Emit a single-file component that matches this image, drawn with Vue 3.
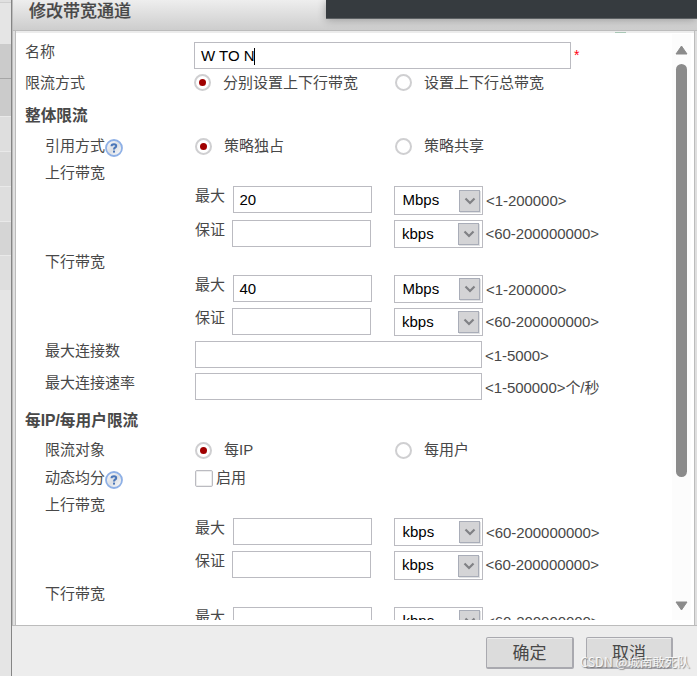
<script setup>
const LIMIT_SMALL = '<1-200000>'
const LIMIT_LARGE = '<60-200000000>'
const rows = [
  { kind: 'name', label: '名称', h: 27 },
  { kind: 'radio', label: '限流方式', options: ['分别设置上下行带宽', '设置上下行总带宽'], h: 27 },
  { kind: 'section', label: '整体限流', h: 38 },
  { kind: 'radio', label: '引用方式', indent: true, help: true, options: ['策略独占', '策略共享'], h: 24 },
  { kind: 'text', label: '上行带宽', indent: true, h: 28 },
  { kind: 'rate', label: '最大', value: '20', unit: 'Mbps', hint: LIMIT_SMALL, h: 34, tall: true },
  { kind: 'rate', label: '保证', value: '', unit: 'kbps', hint: LIMIT_LARGE, h: 27, near: true },
  { kind: 'text', label: '下行带宽', indent: true, h: 28 },
  { kind: 'rate', label: '最大', value: '40', unit: 'Mbps', hint: LIMIT_SMALL, h: 33 },
  { kind: 'rate', label: '保证', value: '', unit: 'kbps', hint: LIMIT_LARGE, h: 33, near: true },
  { kind: 'wide', label: '最大连接数', indent: true, hint: '<1-5000>', h: 32 },
  { kind: 'wide', label: '最大连接速率', indent: true, hint: '<1-500000>个/秒', h: 33 },
  { kind: 'section', label: '每IP/每用户限流', h: 28 },
  { kind: 'radio', label: '限流对象', indent: true, options: ['每IP', '每用户'], h: 32 },
  { kind: 'check', label: '动态均分', indent: true, help: true, h: 24 },
  { kind: 'text', label: '上行带宽', indent: true, h: 28 },
  { kind: 'rate', label: '最大', value: '', unit: 'kbps', hint: LIMIT_LARGE, h: 33 },
  { kind: 'rate', label: '保证', value: '', unit: 'kbps', hint: LIMIT_LARGE, h: 28, near: true, tall: true },
  { kind: 'text', label: '下行带宽', indent: true, h: 28 },
  { kind: 'rate', label: '最大', value: '', unit: 'kbps', hint: LIMIT_LARGE, h: 33 }
]
</script>

<template>
  <div class="page">
    <div class="rail">
      <i class="r0"></i><i class="r1"></i><i class="r2"></i><i class="r3"></i><i class="r4"></i>
      <i class="r5"></i><i class="r6"></i><i class="r7"></i><i class="r8"></i>
    </div>
    <div class="dialog">
      <header class="title">修改带宽通道</header>
      <div class="panel">
        <div class="form">
          <div
            v-for="(row, i) in rows"
            :key="i"
            class="row"
            :class="[row.kind, { indent: row.indent, near: row.near, tall: row.tall }]"
            :style="{ height: row.h + 'px' }"
          >
            <div v-if="row.kind !== 'rate'" class="label">
              <span>{{ row.label }}</span>
              <svg v-if="row.help" class="help" width="18" height="18" viewBox="0 0 18 18">
                <defs>
                  <linearGradient :id="'g' + i" x1="0" y1="0" x2="1" y2="1">
                    <stop offset="0" stop-color="#ffffff" />
                    <stop offset=".5" stop-color="#dcdfe4" />
                    <stop offset="1" stop-color="#ffffff" />
                  </linearGradient>
                </defs>
                <circle cx="9" cy="9" r="8" :fill="'url(#g' + i + ')'" stroke="#8eb0e6" stroke-width="1.8" />
                <path d="M6.6 7.2V6.5Q6.8 5.2 9 5.2Q11.2 5.2 11.2 6.9Q11.2 7.9 10.1 8.5Q9 9.1 9 10.4" fill="none" stroke="#4a76b8" stroke-width="2" />
                <rect x="8" y="11.6" width="2" height="2" fill="#4a76b8" />
              </svg>
            </div>

            <template v-if="row.kind === 'name'">
              <div class="field">W TO N<span class="caret"></span></div>
              <span class="star">*</span>
            </template>

            <template v-else-if="row.kind === 'radio'">
              <div v-for="(o, n) in row.options" :key="o" class="option">
                <span class="dot"><b v-if="n === 0"></b></span>
                <span>{{ o }}</span>
              </div>
            </template>

            <template v-else-if="row.kind === 'check'">
              <span class="box"></span><span>启用</span>
            </template>

            <template v-else-if="row.kind === 'wide'">
              <div class="field"></div>
              <span class="hint">{{ row.hint }}</span>
            </template>

            <template v-else-if="row.kind === 'rate'">
              <span class="sub">{{ row.label }}</span>
              <div class="field">{{ row.value }}</div>
              <div class="select">
                <span>{{ row.unit }}</span>
                <span class="drop">
                  <svg width="12" height="8" viewBox="0 0 12 8">
                    <path d="M1.5 1.5L6 6L10.5 1.5" fill="none" stroke="#808185" stroke-width="2.2" />
                  </svg>
                </span>
              </div>
              <span class="hint">{{ row.hint }}</span>
            </template>
          </div>
        </div>
        <div class="scroll">
          <svg width="13" height="10" viewBox="0 0 13 10"><path d="M6.5 1L12 9H1Z" fill="#8b8b8b" stroke="#8b8b8b" stroke-linejoin="round" /></svg>
          <div class="thumb"></div>
          <svg class="down" width="13" height="10" viewBox="0 0 13 10"><path d="M1 1H12L6.5 9Z" fill="#8b8b8b" stroke="#8b8b8b" stroke-linejoin="round" /></svg>
        </div>
      </div>
      <footer class="actions">
        <div class="btn">确定</div>
        <div class="btn cancel">取消</div>
      </footer>
    </div>
    <div class="shade"></div>
    <div class="glint"></div>
    <div class="mark">CSDN @城南敢死队</div>
  </div>
</template>

<style>
body { margin: 0; overflow: hidden; }
</style>

<style scoped>
* { box-sizing: border-box; }
.page {
  position: relative;
  display: flex;
  width: 697px;
  height: 676px;
  overflow: hidden;
  background: #e5e5e5;
  color: #484848;
  font: 15px/18px "Liberation Sans", "Noto Sans CJK SC", sans-serif;
  white-space: nowrap;
}
.rail { width: 11px; display: flex; flex-direction: column; }
.rail i { display: block; flex: none; border-bottom: 1px solid #e9e9e9; }
.rail .r0 { height: 3px; background: #e0e0e0; border-color: #cfcfcf; }
.rail .r1 { height: 41px; background: #e5e5e5; border-color: #e5e5e5; }
.rail .r2 { height: 35px; background: #cbcbcb; border-color: #a6a6a6; }
.rail .r3 { height: 38px; background: #cbcbcb; }
.rail .r4 { height: 35px; background: #dedede; }
.rail .r5 { height: 35px; background: #d8d8d8; }
.rail .r6 { height: 35px; background: #dedede; }
.rail .r7 { height: 34px; background: #d5d5d5; }
.rail .r8 { height: 34px; background: #dedede; border: 0; }
.dialog {
  width: 686px;
  display: flex;
  flex-direction: column;
  border-left: 1px solid #858585;
  background: #ededed;
}
.title {
  height: 30px;
  padding-left: 16px;
  border-left: 1px solid #bcbcbc;
  background: linear-gradient(#eee, #cdcdcd);
  font-size: 17px;
  font-weight: 500;
  line-height: 24px;
  -webkit-text-stroke: .2px #484848;
}
.panel {
  display: flex;
  width: 685px;
  height: 596px;
  border-left: 1px solid #bcbcbc;
  background: #fff;
  border-top: 1px solid #bcbcbc;
  border-bottom: 1px solid #bcbcbc;
  box-shadow: inset 2px 0 #e0e0e0, inset -2px 0 #dedede, inset 3px 0 #bcbcbc, inset -3px 0 #bcbcbc, inset 0 2px #ececec;
}
.form { width: 659px; height: 589px; padding-top: 11px; overflow: hidden; }
.row { display: flex; align-items: flex-start; }
.label { width: 181px; padding-left: 12px; display: flex; flex: none; }
.name .label, .wide .label, .sub { padding-top: 1px; }
.indent .label { padding-left: 32px; width: 182px; }
.radio, .section, .text, .check { align-items: center; }
.section .label { font-size: 15.7px; font-weight: bold; padding-top: 2px; }
.text .label { padding-top: 1px; }
.help { margin: 2px 0 -2px 0; flex: none; }
.field {
  width: 139px;
  height: 27px;
  border: 1px solid #bbbbc1;
  background: #fff;
  color: #000;
  line-height: 26px;
  padding-left: 6px;
  flex: none;
}
.rate .field { padding-left: 5.5px; }
.name .field { width: 377px; line-height: 25px; }
.wide .field { width: 287px; }
.wide .hint { margin: 6px 0 0 3px; }
.caret { display: inline-block; width: 1px; height: 17px; margin-left: -1px; background: #000; vertical-align: -4px; }
.star { color: #f01; font-size: 14px; margin: 4px 0 0 3px; }
.option { width: 201px; display: flex; align-items: center; flex: none; }
.indent .option { width: 200px; }
.dot {
  width: 17px;
  height: 17px;
  margin-right: 12px;
  border: 2px solid #cfcfd1;
  border-radius: 50%;
  display: flex;
  align-items: center;
  justify-content: center;
  flex: none;
}
.dot b { width: 7px; height: 7px; border-radius: 50%; background: #a00000; }
.box { width: 18px; height: 17px; margin-right: 3px; border: 1px solid #bbbbc1; border-radius: 2px; box-shadow: inset 0 0 0 1px #ededed; }
.rate { padding-left: 182px; }
.sub { width: 38px; }
.near .sub { width: 37px; }
.select {
  width: 89px;
  height: 28px;
  margin-left: 22px;
  padding: 0 2px 1px 7.5px;
  border: 1px solid #bbbbc1;
  background: #fff;
  color: #000;
  display: flex;
  align-items: center;
  justify-content: space-between;
  flex: none;
}
.near .select { margin-left: 23px; padding-left: 7px; padding-right: 3px; }
.tall .select { height: 29px; }
.drop {
  width: 21px;
  height: 22px;
  margin-top: 1px;
  border: 1px solid #a9adb8;
  background: #d4d4d6;
  box-shadow: 1px 1px #e1e2e4;
  display: flex;
  align-items: center;
  justify-content: center;
}
.rate .hint { margin: 6px 0 0 3px; }
.near .hint { margin-top: 5px; margin-left: 2.5px; }
.hint { letter-spacing: -.05px; }
.scroll {
  width: 19px;
  height: 586px;
  margin-top: 3px;
  padding-top: 11px;
  display: flex;
  flex-direction: column;
  align-items: center;
  background: #fcfcfc;
}
.scroll svg { flex: none; }
.thumb { width: 11px; height: 413px; margin-top: 9px; border-radius: 6px; background: #8b8b8b; flex: none; }
.down { margin-top: 124px; }
.actions { display: flex; gap: 12px; padding: 11px 0 0 474px; }
.btn {
  width: 88px;
  height: 32px;
  border: 1px solid #a9a9af;
  border-width: 1px 2px 2px 1px;
  border-radius: 2px;
  background: #dcdcdc;
  box-shadow: inset 0 1px #ededed;
  text-align: center;
  font-size: 17px;
  line-height: 31px;
}
.cancel { width: 87px; }
.shade {
  position: absolute;
  left: 326px;
  top: 0;
  width: 371px;
  height: 19px;
  background: #363b3f;
  border-bottom: 1px solid #5c6063;
  box-shadow: 0 1px 8px rgba(0, 0, 0, .3);
}
.glint {
  position: absolute;
  left: 615px;
  top: 32px;
  width: 11px;
  height: 1px;
  background: #a9c7b6;
}
.mark {
  position: absolute;
  left: 580px;
  top: 653px;
  color: rgba(255, 255, 255, .85);
  font: 12.5px/18px "Noto Sans CJK SC", sans-serif;
  text-shadow: 1px 1px 1px rgba(100, 100, 100, .75);
}
</style>
